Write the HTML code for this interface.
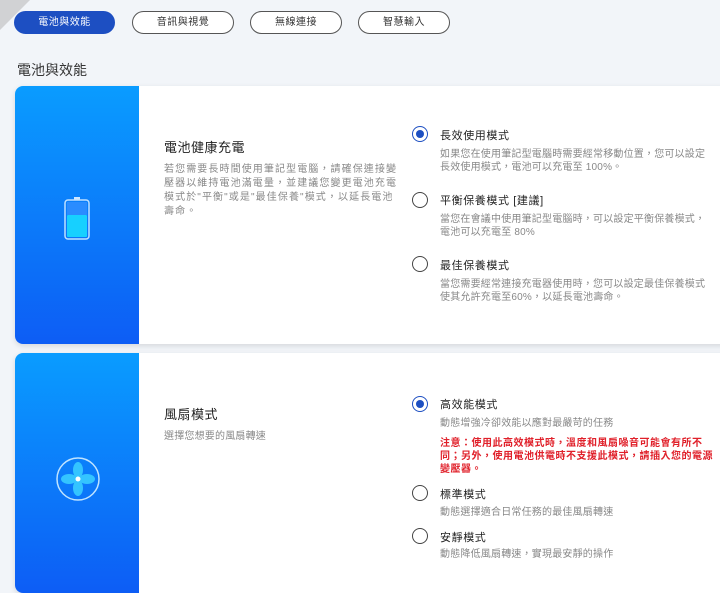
<!DOCTYPE html>
<html><head><meta charset="utf-8"><style>
*{margin:0;padding:0;box-sizing:border-box}
body{width:720px;height:579px;overflow:hidden;background:#f2f5f9;font-family:"Liberation Sans","Noto Sans CJK TC",sans-serif;position:relative;color:#333}
.tab{position:absolute;top:11px;height:23px;border:1px solid #555;border-radius:12px;font-size:10px;line-height:21px;text-align:center;color:#333;background:#fff;letter-spacing:.5px}
.tab.on{background:#1d4fc2;border-color:#1d4fc2;color:#fff}
.h{position:absolute;left:17px;top:60px;font-size:14px;color:#333}
.card{position:absolute;left:15px;width:720px;background:#fff;border-radius:8px;box-shadow:0 2px 6px rgba(0,0,0,.12);overflow:hidden}
.blue{position:absolute;left:0;top:0;bottom:0;width:124px;background:linear-gradient(180deg,#0a9cff,#0d5df5)}
.t{position:absolute;font-size:13px;color:#222;letter-spacing:.5px}
.d{position:absolute;font-size:10px;line-height:13px;color:#888;letter-spacing:.2px}
.dl{letter-spacing:1.1px;line-height:14px}
.r{position:absolute;width:16px;height:16px;border:1.5px solid #444;border-radius:50%;background:#fff}
.r.on{border-color:#1d4fc2;border-width:1px}
.r.on::after{content:"";position:absolute;left:3px;top:3px;width:8px;height:8px;border-radius:50%;background:#1d4fc2}
.l{position:absolute;font-size:11px;color:#222;letter-spacing:.6px}
.red{color:#e0202a;letter-spacing:.5px;font-weight:bold}
</style></head><body>
<div style="position:absolute;left:0;top:0;width:0;height:0;border-top:30px solid #bbb;border-right:30px solid transparent;opacity:.6"></div>
<div class="tab on" style="left:14px;width:101px">電池與效能</div>
<div class="tab" style="left:132px;width:102px">音訊與視覺</div>
<div class="tab" style="left:250px;width:92px">無線連接</div>
<div class="tab" style="left:358px;width:92px">智慧輸入</div>
<div class="h">電池與效能</div>

<div class="card" style="top:86px;height:258px">
<div class="blue"></div>
<svg style="position:absolute;left:48px;top:110px" width="28" height="45"><rect x="11" y="1" width="6" height="3" fill="#cfe6ff"/><rect x="2" y="4" width="24" height="39" rx="3" fill="none" stroke="#bfe0ff" stroke-width="1.5"/><rect x="4" y="6" width="20" height="13" fill="#2a8cff"/><rect x="4" y="19" width="20" height="22" rx="1" fill="#17d0ff"/></svg>
<div class="t" style="left:149px;top:51px">電池健康充電</div>
<div class="d dl" style="left:149px;top:77px;width:240px">若您需要長時間使用筆記型電腦，請確保連接變壓器以維持電池滿電量，並建議您變更電池充電模式於"平衡"或是"最佳保養"模式，以延長電池壽命。</div>
<div class="r on" style="left:397px;top:40px"></div>
<div class="l" style="left:425px;top:41px">長效使用模式</div>
<div class="d" style="left:425px;top:62px;width:272px">如果您在使用筆記型電腦時需要經常移動位置，您可以設定長效使用模式，電池可以充電至 100%。</div>
<div class="r" style="left:397px;top:106px"></div>
<div class="l" style="left:425px;top:106px">平衡保養模式 [建議]</div>
<div class="d" style="left:425px;top:127px;width:272px">當您在會議中使用筆記型電腦時，可以設定平衡保養模式，電池可以充電至 80%</div>
<div class="r" style="left:397px;top:170px"></div>
<div class="l" style="left:425px;top:171px">最佳保養模式</div>
<div class="d" style="left:425px;top:192px;width:272px">當您需要經常連接充電器使用時，您可以設定最佳保養模式使其允許充電至60%，以延長電池壽命。</div>
</div>

<div class="card" style="top:353px;height:240px">
<div class="blue"></div>
<svg style="position:absolute;left:40px;top:103px" width="46" height="46"><circle cx="23" cy="23" r="21" fill="none" stroke="#bfe3ff" stroke-width="1.5"/><g fill="#34c4ff"><ellipse cx="23" cy="14" rx="5" ry="8"/><ellipse cx="32" cy="23" rx="8" ry="5"/><ellipse cx="23" cy="32" rx="5" ry="8"/><ellipse cx="14" cy="23" rx="8" ry="5"/></g><circle cx="23" cy="23" r="2.5" fill="#fff"/></svg>
<div class="t" style="left:149px;top:51px">風扇模式</div>
<div class="d" style="left:149px;top:77px">選擇您想要的風扇轉速</div>
<div class="r on" style="left:397px;top:43px"></div>
<div class="l" style="left:425px;top:43px">高效能模式</div>
<div class="d" style="left:425px;top:64px">動態增強冷卻效能以應對最嚴苛的任務</div>
<div class="d red" style="left:425px;top:84px;width:275px">注意：使用此高效模式時，溫度和風扇噪音可能會有所不同；另外，使用電池供電時不支援此模式，請插入您的電源變壓器。</div>
<div class="r" style="left:397px;top:132px"></div>
<div class="l" style="left:425px;top:133px">標準模式</div>
<div class="d" style="left:425px;top:153px">動態選擇適合日常任務的最佳風扇轉速</div>
<div class="r" style="left:397px;top:175px"></div>
<div class="l" style="left:425px;top:176px">安靜模式</div>
<div class="d" style="left:425px;top:195px">動態降低風扇轉速，實現最安靜的操作</div>
</div>
</body></html>
